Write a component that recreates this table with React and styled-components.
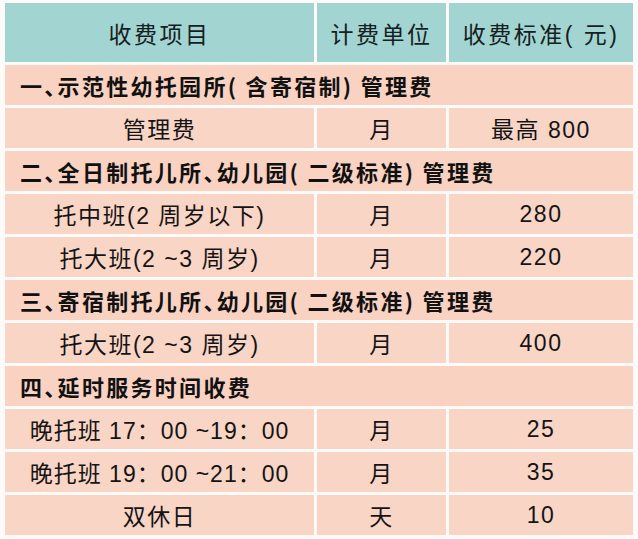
import React from 'react';
import styled, { createGlobalStyle } from 'styled-components';

const GlobalStyle = createGlobalStyle`
  html, body {
    margin: 0;
    padding: 0;
    background: #fdfbfa;
  }
`;

const Sheet = styled.div`
  width: 638px;
  height: 539px;
  box-sizing: border-box;
  padding: 3px 5px 0 5px;
  display: grid;
  grid-template-columns: 309px 129px 184px;
  grid-template-rows: 59px;
  grid-auto-rows: 40px;
  gap: 3px;
  align-content: start;
  font-family: 'Liberation Sans', 'Noto Sans CJK SC', sans-serif;
  color: #141414;
`;

const Head = styled.div`
  background: #a2d4d2;
  display: flex;
  align-items: center;
  justify-content: center;
  font-size: 23px;
  letter-spacing: 2.5px;
  color: #16201f;
`;

const Section = styled.div`
  grid-column: 1 / -1;
  background: #f9d2c2;
  display: flex;
  align-items: center;
  padding-left: 15px;
  font-size: 22px;
  font-weight: 700;
  letter-spacing: 2.3px;
  font-family: 'Noto Sans CJK SC', sans-serif;
  font-feature-settings: 'halt';
  color: #111;
`;

const Cell = styled.div`
  background: #f9d5c6;
  display: flex;
  align-items: center;
  justify-content: center;
  font-size: 23px;
  letter-spacing: ${(p) => (p.$tight ? '1px' : '1.5px')};
  white-space: pre;
`;

const rows = [
  { section: '一、示范性幼托园所( 含寄宿制) 管理费' },
  { item: '管理费', unit: '月', fee: '最高 800' },
  { section: '二、全日制托儿所、幼儿园( 二级标准) 管理费' },
  { item: '托中班(2 周岁以下)', unit: '月', fee: '280' },
  { item: '托大班(2 ~3 周岁)', unit: '月', fee: '220' },
  { section: '三、寄宿制托儿所、幼儿园( 二级标准) 管理费' },
  { item: '托大班(2 ~3 周岁)', unit: '月', fee: '400' },
  { section: '四、延时服务时间收费' },
  { item: '晚托班 17：00 ~19：00', unit: '月', fee: '25', tight: true },
  { item: '晚托班 19：00 ~21：00', unit: '月', fee: '35', tight: true },
  { item: '双休日', unit: '天', fee: '10' },
];

const App = () => (
  <>
    <GlobalStyle />
    <Sheet>
      <Head>收费项目</Head>
      <Head>计费单位</Head>
      <Head>收费标准( 元)</Head>
      {rows.map((r, i) =>
        r.section ? (
          <Section key={i}>{r.section}</Section>
        ) : (
          <React.Fragment key={i}>
            <Cell $tight={r.tight}>{r.item}</Cell>
            <Cell>{r.unit}</Cell>
            <Cell>{r.fee}</Cell>
          </React.Fragment>
        )
      )}
    </Sheet>
  </>
);

export default App;
